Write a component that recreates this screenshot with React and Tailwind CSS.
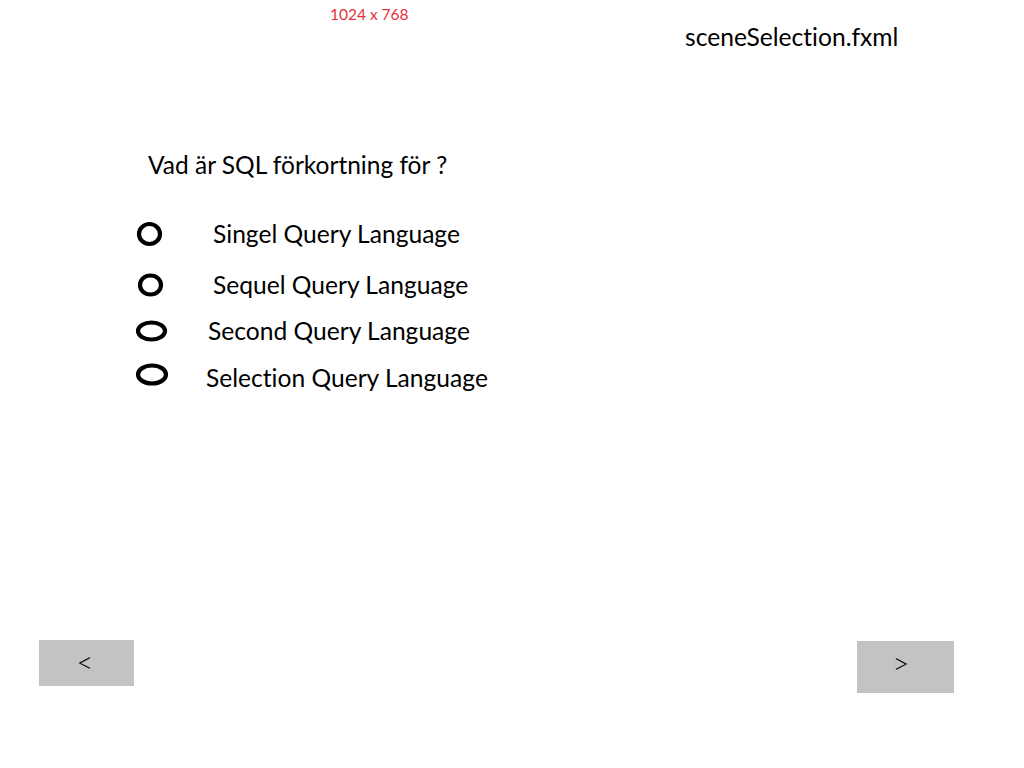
import React from "react";

const font = { fontFamily: "Lato, 'Liberation Sans', sans-serif" };

const options = [
  { label: "Singel Query Language", rx: 10.5, ry: 10, cx: 149.5, textX: 213, mt: "mt-[36px]", dy: 0 },
  { label: "Sequel Query Language", rx: 10.5, ry: 9.5, cx: 150.5, textX: 213, mt: "mt-[15px]", dy: 0 },
  { label: "Second Query Language", rx: 13.5, ry: 8.5, cx: 151.5, textX: 208, mt: "mt-[10px]", dy: 0 },
  { label: "Selection Query Language", rx: 14, ry: 9, cx: 152, textX: 206, mt: "mt-[11px]", dy: -3.5 },
];

function Radio({ rx, ry, cx, dy }) {
  // ring drawn at its own x, centred on the row (dy nudges it up/down)
  return (
    <svg width="1024" height="36" className="absolute left-0 top-0 pointer-events-none">
      <ellipse cx={cx} cy={18 + dy} rx={rx} ry={ry} fill="none" stroke="#000" strokeWidth="4.2" />
    </svg>
  );
}

export default function App() {
  return (
    <div className="w-[1024px] h-[768px] bg-white text-black overflow-hidden [font-variant-ligatures:none]" style={font}>
      <header className="h-[60px] flex items-start">
        <span className="ml-[330px] mt-[4px] w-[355px] text-[15.5px] leading-[20px] text-[#e8303a]">1024 x 768</span>
        <span className="mt-[22px] text-[24.6px] leading-[30px]">sceneSelection.fxml</span>
      </header>

      <p className="mt-[90px] h-[30px] pl-[148px] text-[24.5px] leading-[30px]">Vad är SQL förkortning för ?</p>

      <div>
        {options.map((o) => (
          <div key={o.label} className={`relative h-[36px] flex items-center ${o.mt}`}>
            <Radio rx={o.rx} ry={o.ry} cx={o.cx} dy={o.dy} />
            <span className="text-[24.6px] leading-[36px]" style={{ marginLeft: o.textX }}>
              {o.label}
            </span>
          </div>
        ))}
      </div>

      <div className="mt-[244px] flex items-start">
        <button className="ml-[39px] w-[95px] h-[46px] bg-[#c3c3c3] flex items-center justify-center text-[29px] font-light leading-none pb-[3px] pr-[3px]">
          &lt;
        </button>
        <button className="ml-[723px] mt-[1px] w-[97px] h-[52px] bg-[#c3c3c3] flex items-center justify-center text-[29px] font-light leading-none pr-[9px] pb-[9px]">
          &gt;
        </button>
      </div>
    </div>
  );
}
